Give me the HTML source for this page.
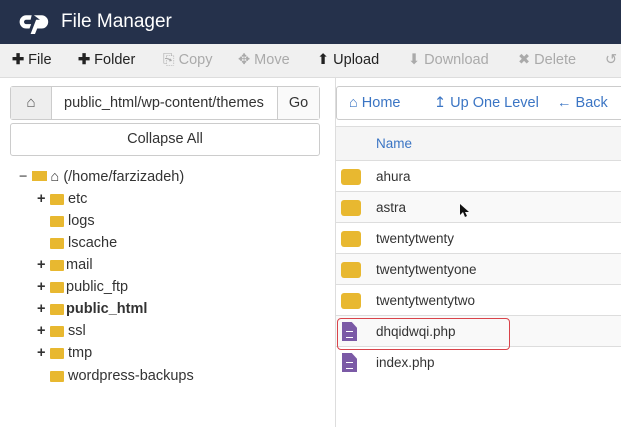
<!DOCTYPE html>
<html><head><style>
*{box-sizing:border-box;margin:0;padding:0}
body{width:621px;height:427px;overflow:hidden;background:#fff;font-family:"Liberation Sans",sans-serif;position:relative;color:#333}
.hdr{position:absolute;left:0;top:0;width:621px;height:44px;background:#25314b;color:#fff}
.hdr .t{position:absolute;left:61px;top:11px;font-size:19px}
.tb{position:absolute;left:0;top:44px;width:621px;height:34px;background:#f0f0f0;border-bottom:1px solid #ddd;font-size:14.5px;color:#222}
.tb span{position:absolute;top:8px;white-space:nowrap}
.dis{color:#aaa}
.a{position:absolute}
.fold{display:inline-block;width:14px;height:11px;background:#e8b830;border-radius:1px;position:absolute}
.tree div{position:absolute;font-size:14.5px;white-space:nowrap}
.row{position:absolute;left:336px;width:285px;height:31px;border-top:1px solid #ddd;font-size:13.5px}
.row .n{position:absolute;left:40px;top:8px}
.row .f{left:5px;top:8px;width:20px;height:16px;border-radius:3px}
.php{position:absolute;left:6px;top:6px;width:15px;height:19px;background:#7b5aa6;clip-path:polygon(0 0,65% 0,100% 30%,100% 100%,0 100%)}
.php:after{content:"";position:absolute;left:4px;top:9px;width:7px;height:5px;border-top:1px solid #fff;border-bottom:1px solid #fff}
</style></head><body>
<div class="hdr">
<svg class="a" style="left:19px;top:12px" width="32" height="22" viewBox="0 0 28 20"><path d="M11 3H6a6 6 0 0 0 0 12h3l1.5-4H6a2 2 0 0 1 0-4h4z" fill="#fff"/><path d="M13 3h7a6 6 0 0 1 0 12h-4l-2 5h-4l5-13h5a2 2 0 0 1 0 4h-3l1.5-4z" fill="#fff"/></svg>
<div class="t">File Manager</div></div>
<div class="tb">
<span style="left:12px"><b>✚</b> File</span>
<span style="left:78px"><b>✚</b> Folder</span>
<span style="left:163px" class="dis">⎘ Copy</span>
<span style="left:238px" class="dis">✥ Move</span>
<span style="left:317px">⬆ Upload</span>
<span style="left:408px" class="dis">⬇ Download</span>
<span style="left:518px" class="dis">✖ Delete</span>
<span style="left:605px" class="dis">↺</span>
</div>
<div class="a" style="left:10px;top:86px;width:310px;height:34px;border:1px solid #ccc;border-radius:3px;background:#fff">
<div class="a" style="left:0;top:0;width:41px;height:32px;background:#eee;border-right:1px solid #ccc;text-align:center;line-height:32px;font-size:15px;color:#555">⌂</div>
<div class="a" style="left:53px;top:8px;font-size:14.5px;white-space:nowrap;width:211px;overflow:hidden">public_html/wp-content/themes</div>
<div class="a" style="left:266px;top:0;width:42px;height:32px;border-left:1px solid #ccc;background:#fafafa;font-size:14.5px;line-height:32px;text-align:center">Go</div>
</div>
<div class="a" style="left:10px;top:123px;width:310px;height:33px;border:1px solid #ccc;border-radius:3px;text-align:center;line-height:31px;font-size:14.5px">Collapse All</div>
<div class="a" style="left:335px;top:78px;width:1px;height:349px;background:#ddd"></div>
<div class="a" style="left:336px;top:86px;width:290px;height:34px;border:1px solid #ccc;border-radius:3px;font-size:14.5px;color:#3b75c4">
<span class="a" style="left:12px;top:8px">⌂ Home</span>
<span class="a" style="left:97px;top:8px">↥ Up One Level</span>
<span class="a" style="left:220px;top:8px">← Back</span></div>
<div class="a" style="left:336px;top:126px;width:285px;height:34px;background:#f5f5f5;border-top:1px solid #ddd"><span class="a" style="left:40px;top:9px;color:#3b75c4;font-size:13.5px">Name</span></div>
<div class="tree">
<div style="left:19px;top:169px">− <span style="display:inline-block;width:15px;height:10px;background:#e8b830"></span> ⌂ (/home/farzizadeh)</div>
<div style="left:37px;top:191px"><b>+</b></div><span class="fold" style="left:50px;top:194px"></span><div style="left:68px;top:191px">etc</div>
<span class="fold" style="left:50px;top:216px"></span><div style="left:68px;top:213px">logs</div>
<span class="fold" style="left:50px;top:238px"></span><div style="left:68px;top:235px">lscache</div>
<div style="left:37px;top:257px"><b>+</b></div><span class="fold" style="left:50px;top:260px"></span><div style="left:66px;top:257px">mail</div>
<div style="left:37px;top:279px"><b>+</b></div><span class="fold" style="left:50px;top:282px"></span><div style="left:66px;top:279px">public_ftp</div>
<div style="left:37px;top:301px"><b>+</b></div><span class="fold" style="left:50px;top:304px"></span><div style="left:66px;top:301px;font-weight:bold">public_html</div>
<div style="left:37px;top:323px"><b>+</b></div><span class="fold" style="left:50px;top:326px"></span><div style="left:68px;top:323px">ssl</div>
<div style="left:37px;top:345px"><b>+</b></div><span class="fold" style="left:50px;top:348px"></span><div style="left:68px;top:345px">tmp</div>
<span class="fold" style="left:50px;top:371px"></span><div style="left:68px;top:368px">wordpress-backups</div>
</div>
<div class="row" style="top:160px"><span class="fold f"></span><span class="n">ahura</span></div>
<div class="row" style="top:191px;background:#f9f9f9"><span class="fold f"></span><span class="n">astra</span></div>
<div class="row" style="top:222px"><span class="fold f"></span><span class="n">twentytwenty</span></div>
<div class="row" style="top:253px;background:#f9f9f9"><span class="fold f"></span><span class="n">twentytwentyone</span></div>
<div class="row" style="top:284px"><span class="fold f"></span><span class="n">twentytwentytwo</span></div>
<div class="row" style="top:315px;background:#f9f9f9"><span class="php"></span><span class="n">dhqidwqi.php</span></div>
<div class="row" style="top:346px"><span class="php"></span><span class="n">index.php</span></div>
<div class="a" style="left:337px;top:318px;width:173px;height:32px;border:1.5px solid #d9434a;border-radius:4px"></div>
<svg class="a" style="left:459px;top:203px" width="10" height="15" viewBox="0 0 10 15"><path d="M1 1v11l3-3 2 5 2-1-2-4h4z" fill="#111"/></svg>
</body></html>
